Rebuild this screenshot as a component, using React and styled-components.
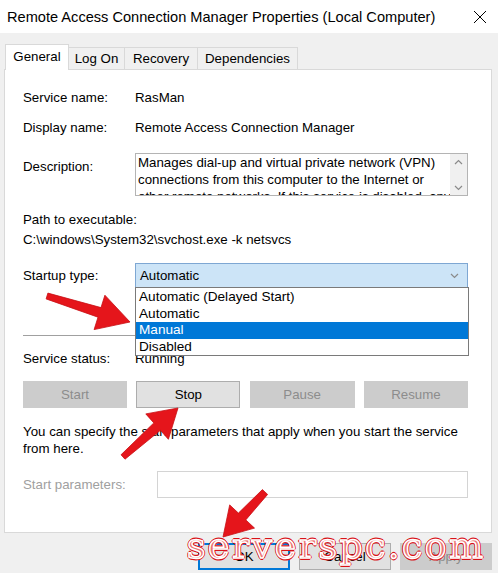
import styled, { createGlobalStyle } from 'styled-components';

const GlobalStyle = createGlobalStyle`
  html, body {
    margin: 0;
    padding: 0;
  }
  body {
    font-family: "Liberation Sans", Arial, sans-serif;
    font-size: 13.3px;
    color: #000;
  }
`;

const Window = styled.div`
  position: relative;
  width: 498px;
  height: 573px;
  overflow: hidden;
  background: #f0f0f0;
  display: flex;
  flex-direction: column;
`;

const TitleBar = styled.div`
  height: 33px;
  flex: none;
  background: #fff;
  display: flex;
  align-items: center;
  justify-content: space-between;
  padding: 0 11px 0 7px;
  font-size: 14.6px;
  white-space: nowrap;
`;

const Body = styled.div`
  padding: 10px 6px 0 4px;
`;

const TabStrip = styled.div`
  display: flex;
  align-items: flex-end;
  height: 26px;
  padding-left: 1px;
`;

const Tab = styled.div`
  box-sizing: border-box;
  width: ${p => p.$w}px;
  height: ${p => (p.$active ? 26 : 22)}px;
  display: flex;
  align-items: center;
  justify-content: center;
  background: ${p => (p.$active ? '#fff' : '#f0f0f0')};
  border: 1px solid #d9d9d9;
  border-bottom: none;
  margin-left: ${p => (p.$active ? 0 : -1)}px;
  margin-bottom: ${p => (p.$active ? -1 : 0)}px;
  position: relative;
  z-index: ${p => (p.$active ? 1 : 0)};
  padding-bottom: ${p => (p.$active ? 2 : 0)}px;
`;

const Panel = styled.div`
  box-sizing: border-box;
  height: 464px;
  background: #fff;
  border: 1px solid #d9d9d9;
  padding: 18px 23px 0 18px;
`;

const Field = styled.div`
  display: grid;
  grid-template-columns: ${p => p.$label || 112}px 1fr;
  align-items: ${p => (p.$top ? 'start' : 'center')};
  margin-top: ${p => p.$mt || 0}px;
  line-height: 20px;
  white-space: nowrap;
`;

const Label = styled.div`
  color: ${p => (p.$disabled ? '#a0a0a0' : '#000')};
  padding-top: ${p => p.$pt || 0}px;
`;

const Line = styled.div`
  margin-top: ${p => p.$mt || 0}px;
  line-height: 20px;
  white-space: nowrap;
`;

const DescBox = styled.div`
  box-sizing: border-box;
  height: 43px;
  border: 1px solid #b4b4b4;
  display: flex;
  overflow: hidden;
`;

const DescText = styled.div`
  flex: 1;
  padding: 0 2px;
  line-height: 17px;
  white-space: nowrap;
  overflow: hidden;
`;

const ScrollBar = styled.div`
  width: 17px;
  flex: none;
  background: #f0f0f0;
  display: flex;
  flex-direction: column;
  justify-content: space-between;
  align-items: center;
  padding: 5px 0 4px;
`;

const Combo = styled.div`
  position: relative;
  box-sizing: border-box;
  height: 25px;
  background: #cce4f7;
  border: 1px solid #7ea7d3;
  display: flex;
  align-items: center;
  justify-content: space-between;
  padding: 0 8px 0 4px;
`;

const DropList = styled.div`
  position: absolute;
  top: 100%;
  left: -1px;
  width: 334px;
  box-sizing: border-box;
  background: #fff;
  border: 1px solid #7a7a7a;
  padding: 1px 0 0;
  z-index: 5;
  font-size: 13.6px;
`;

const DropItem = styled.div`
  height: 16.5px;
  line-height: 16.5px;
  padding-left: 3px;
  background: ${p => (p.$selected ? '#0078d7' : 'transparent')};
  color: ${p => (p.$selected ? '#fff' : '#000')};
`;

const Separator = styled.div`
  margin-top: 47px;
  height: 1px;
  background: #a0a0a0;
`;

const ButtonRow = styled.div`
  display: grid;
  grid-template-columns: 104px 104px 105px 104px;
  justify-content: space-between;
  margin-top: 12px;
`;

const Button = styled.div`
  box-sizing: border-box;
  height: 27px;
  width: ${p => (p.$w ? `${p.$w}px` : 'auto')};
  display: flex;
  align-items: center;
  justify-content: center;
  background: ${p => (p.$disabled ? '#cccccc' : '#e1e1e1')};
  border: 1px solid ${p => (p.$disabled ? '#cccccc' : p.$default ? '#0078d7' : '#adadad')};
  box-shadow: ${p => (p.$default ? 'inset 0 0 0 1px #0078d7' : 'none')};
  color: ${p => (p.$disabled ? '#8c8c8c' : '#000')};
`;

const Paragraph = styled.div`
  margin-top: 15px;
  line-height: 17px;
`;

const Input = styled.div`
  box-sizing: border-box;
  height: 27px;
  border: 1px solid #d4d4d4;
  background: #fff;
`;

const Footer = styled.div`
  display: flex;
  justify-content: flex-end;
  gap: 9px;
  margin-top: 10px;
`;

const Overlay = styled.svg`
  position: absolute;
  top: 0;
  left: 0;
  pointer-events: none;
  z-index: 10;
`;

const Watermark = styled.div`
  position: absolute;
  left: 187px;
  top: 528px;
  z-index: 11;
  font-family: "DejaVu Serif", "Liberation Serif", serif;
  font-size: 36px;
  line-height: 1;
  letter-spacing: 2.6px;
  color: #ea7272;
  -webkit-text-stroke: 1.5px #fff;
  text-shadow:
    1px 1px 0 #d8141a, -1px -1px 0 #d8141a, 1px -1px 0 #d8141a, -1px 1px 0 #d8141a,
    1.6px 0 0 #d8141a, -1.6px 0 0 #d8141a, 0 1.6px 0 #d8141a, 0 -1.6px 0 #d8141a;
  white-space: nowrap;
`;

const Chevron = ({ up }) => (
  <svg width="9" height="6" viewBox="0 0 9 6">
    <path
      d={up ? 'M1 5 L4.5 1.5 L8 5' : 'M1 1 L4.5 4.5 L8 1'}
      fill="none"
      stroke="#8a8a8a"
      strokeWidth="1.2"
    />
  </svg>
);

const tabs = [
  { name: 'General', w: 64, active: true },
  { name: 'Log On', w: 57 },
  { name: 'Recovery', w: 74 },
  { name: 'Dependencies', w: 101 },
];

const startupOptions = ['Automatic (Delayed Start)', 'Automatic', 'Manual', 'Disabled'];

const arrows = [
  '47.9,293.1 101,307.6 104.9,295.2 130,322 94.1,329.6 98,317.2 46.1,298.9',
  '121,454.8 153.8,422.9 145.8,413.9 178,408 168.4,439.3 160.4,430.3 125,459.2',
  '262.4,489.6 238.4,513.1 229.7,504.9 223,537 254.5,528.1 245.8,519.9 267.6,494.4',
];

export default function App() {
  return (
    <>
      <GlobalStyle />
      <Window>
        <TitleBar>
          <span>Remote Access Connection Manager Properties (Local Computer)</span>
          <svg width="14" height="14" viewBox="0 0 14 14">
            <path d="M1 1 L13 13 M13 1 L1 13" stroke="#000" strokeWidth="1" />
          </svg>
        </TitleBar>
        <Body>
          <TabStrip>
            {tabs.map(t => (
              <Tab key={t.name} $w={t.w} $active={t.active}>{t.name}</Tab>
            ))}
          </TabStrip>
          <Panel>
            <Field>
              <Label>Service name:</Label>
              <div>RasMan</div>
            </Field>
            <Field $mt={10}>
              <Label>Display name:</Label>
              <div>Remote Access Connection Manager</div>
            </Field>
            <Field $mt={15} $top>
              <Label $pt={4}>Description:</Label>
              <DescBox>
                <DescText>
                  Manages dial-up and virtual private network (VPN)<br />
                  connections from this computer to the Internet or<br />
                  other remote networks. If this service is disabled, any
                </DescText>
                <ScrollBar>
                  <Chevron up />
                  <Chevron />
                </ScrollBar>
              </DescBox>
            </Field>
            <Line $mt={14}>Path to executable:</Line>
            <Line>C:\windows\System32\svchost.exe -k netsvcs</Line>
            <Field $mt={13}>
              <Label>Startup type:</Label>
              <Combo>
                <span>Automatic</span>
                <Chevron />
                <DropList>
                  {startupOptions.map(o => (
                    <DropItem key={o} $selected={o === 'Manual'}>{o}</DropItem>
                  ))}
                </DropList>
              </Combo>
            </Field>
            <Separator />
            <Field $mt={13}>
              <Label>Service status:</Label>
              <div>Running</div>
            </Field>
            <ButtonRow>
              <Button $disabled>Start</Button>
              <Button>Stop</Button>
              <Button $disabled>Pause</Button>
              <Button $disabled>Resume</Button>
            </ButtonRow>
            <Paragraph>
              You can specify the start parameters that apply when you start the service<br />
              from here.
            </Paragraph>
            <Field $mt={14} $label={134}>
              <Label $disabled>Start parameters:</Label>
              <Input />
            </Field>
          </Panel>
          <Footer>
            <Button $w={92} $default>OK</Button>
            <Button $w={92}>Cancel</Button>
            <Button $w={92} $disabled>Apply</Button>
          </Footer>
        </Body>
        <Overlay width="498" height="573" viewBox="0 0 498 573">
          {arrows.map((pts, i) => (
            <polygon key={i} points={pts} fill="#e5151b" stroke="#c80f14" strokeWidth="0.8" strokeLinejoin="round" />
          ))}
        </Overlay>
        <Watermark>serverspc.com</Watermark>
      </Window>
    </>
  );
}
